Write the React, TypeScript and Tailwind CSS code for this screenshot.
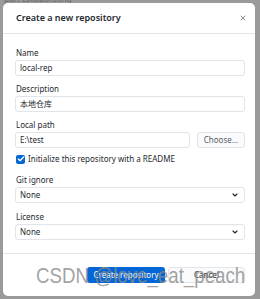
import { X, ChevronDown, Check } from "lucide-react";

const FONT = "font-['Noto_Sans','Noto_Sans_CJK_SC',sans-serif]";

function Label({ children }: { children: React.ReactNode }) {
    return <div className="text-[8px] leading-[13px] text-[#24292e] pl-px mb-px">{children}</div>;
}

function TextBox({ value, className = "" }: { value: string; className?: string }) {
    return (
        <div className={"h-4 border border-[#e1e4e8] rounded-[3px] bg-white flex items-center px-[4px] text-[8px] text-[#24292e] " + className}>
            {value}
        </div>
    );
}

function SelectBox({ value }: { value: string }) {
    return (
        <div className="h-4 border border-[#e1e4e8] rounded-[3px] bg-white flex items-center justify-between pl-[4px] pr-[5px] text-[8px] text-[#24292e]">
            <span>{value}</span>
            <ChevronDown className="w-[8px] h-[8px] text-[#24292e]" strokeWidth={3.5} />
        </div>
    );
}

export default function App() {
    return (
        <div className={"w-[260px] h-[299px] bg-[#9a9a9a] relative overflow-hidden " + FONT}>
            {/* background text peeking above the dialog */}
            <div className="absolute left-[4px] -top-[7px] text-[8px] text-[#444] opacity-60">port collaborating</div>

            <div className="absolute left-[3px] top-[3px] w-[252px] h-[293px] bg-white rounded-[5px] flex flex-col">
                {/* Header */}
                <div className="h-[31px] flex items-center justify-between pl-[13px] pr-[8px] border-b border-[#e1e4e8]">
                    <span className="text-[9px] font-semibold text-[#24292e]">Create a new repository</span>
                    <X className="w-[8px] h-[8px] text-[#6a737d]" strokeWidth={2.5} />
                </div>

                {/* Body */}
                <div className="pl-3 pr-[10px] pt-[12px] flex-1">
                    <Label>Name</Label>
                    <TextBox value="local-rep" />

                    <div className="mt-[6px]">
                        <Label>Description</Label>
                        <TextBox value="本地仓库" />
                    </div>

                    <div className="mt-[6px]">
                        <Label>Local path</Label>
                        <div className="flex gap-[7px] mt-[1px]">
                            <TextBox value="E:\test" className="flex-1" />
                            <div className="h-4 w-[48px] border border-[#e1e4e8] rounded-[3px] bg-[#fafbfc] flex items-center justify-center text-[8px] text-[#586069]">
                                Choose...
                            </div>
                        </div>
                    </div>

                    <div className="flex items-center gap-[3px] mt-[5px] h-[12px] pl-[1px]">
                        <div className="w-[9px] h-[9px] rounded-[2px] bg-[#0366d6] flex items-center justify-center">
                            <Check className="w-[8px] h-[8px] text-white" strokeWidth={4} />
                        </div>
                        <span className="text-[8px] text-[#24292e]">Initialize this repository with a README</span>
                    </div>

                    <div className="mt-[8px]">
                        <Label>Git ignore</Label>
                        <SelectBox value="None" />
                    </div>

                    <div className="mt-[7px]">
                        <Label>License</Label>
                        <SelectBox value="None" />
                    </div>
                </div>

                {/* Footer */}
                <div className="h-[43px] border-t border-[#e1e4e8] flex items-center justify-end gap-[3px] pr-[10px]">
                    <div className="h-[16px] w-[78px] rounded-[3px] bg-[#0366d6] text-white text-[8px] flex items-center justify-center">
                        Create repository
                    </div>
                    <div className="h-[16px] w-[77px] rounded-[3px] border border-[#e1e4e8] bg-[#fafbfc] text-[#24292e] text-[8px] flex items-center justify-center">
                        Cancel
                    </div>
                </div>
            </div>

            {/* watermark */}
            <div className="absolute left-[36px] top-[263px] text-[22px] leading-[26px] text-[#8a8a8a]/80 font-['Liberation_Sans',sans-serif] whitespace-nowrap scale-x-[0.85] origin-left">
                CSDN @love_eat_peach
            </div>
        </div>
    );
}
